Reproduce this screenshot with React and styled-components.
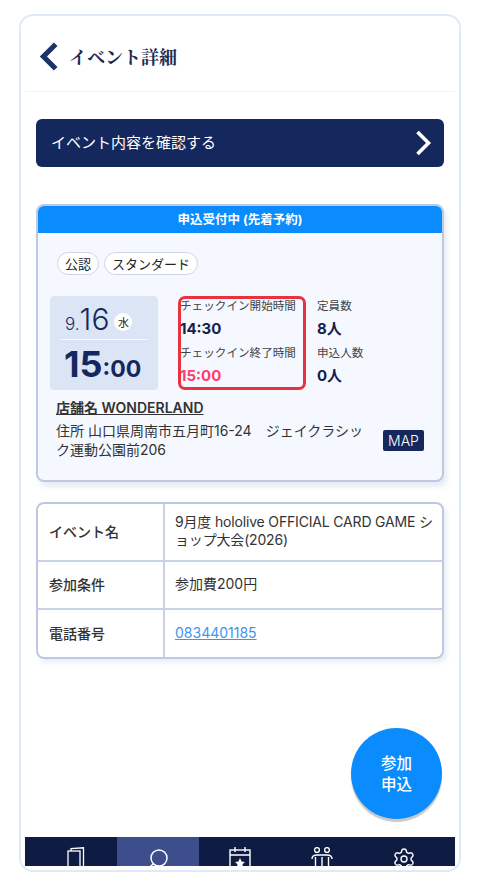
import styled, { createGlobalStyle } from "styled-components";
import { Search, Settings } from "lucide-react";

const Global = createGlobalStyle`
  html, body {
    margin: 0;
    background: #fff;
    font-family: Inter, "Noto Sans CJK JP", sans-serif;
    color: #222;
  }
  * { box-sizing: border-box; }
`;

const Page = styled.div`
  width: 480px;
  height: 886px;
  padding: 14px 19px 14px 19px;
  overflow: hidden;
`;

const Frame = styled.div`
  position: relative;
  height: 858px;
  border: 2px solid #dfe9f8;
  border-radius: 14px;
  padding: 0 4px 4px;
  display: flex;
  flex-direction: column;
  overflow: hidden;
`;

const Header = styled.header`
  height: 76px;
  flex: none;
  display: flex;
  align-items: center;
  gap: 10px;
  padding: 5px 0 0 14px;
  border-bottom: 1px solid #f1f3f6;
`;

const Title = styled.h1`
  margin: 0;
  font-family: "Liberation Serif", "Noto Serif CJK JP", "Noto Sans CJK JP", serif;
  font-size: 18px;
  font-weight: 700;
  color: #1c2b52;
`;

const Content = styled.main`
  flex: 1;
  padding: 27px 11px 0;
  display: flex;
  flex-direction: column;
`;

const ConfirmButton = styled.div`
  height: 48px;
  border-radius: 6px;
  background: #14285d;
  color: #fff;
  font-size: 15px;
  display: flex;
  align-items: center;
  justify-content: space-between;
  padding: 0 12px 0 15px;
`;

const ConfirmText = styled.span`
  margin-bottom: 3px;
`;

const Card = styled.section`
  margin-top: 37px;
  height: 278px;
  border: 2px solid #bcc9e0;
  border-radius: 8px;
  background: #f5f9ff;
  box-shadow: 3px 5px 5px rgba(188, 201, 224, 0.35);
  overflow: hidden;
`;

const StatusBar = styled.div`
  height: 27px;
  background: #0a8cff;
  color: #fff;
  font-size: 12.5px;
  font-weight: 700;
  padding-bottom: 2px;
  display: flex;
  align-items: center;
  justify-content: center;
`;

const Tags = styled.div`
  display: flex;
  gap: 5px;
  padding: 19px 0 0 19px;
`;

const Tag = styled.span`
  height: 23px;
  padding: 0 7px 1px;
  border: 1px solid #ccd5e4;
  border-radius: 12px;
  background: #fff;
  font-size: 13px;
  display: flex;
  align-items: center;
`;

const Schedule = styled.div`
  display: flex;
  margin: 21px 0 0 12px;
`;

const DateBox = styled.div`
  width: 108px;
  height: 94px;
  border-radius: 4px;
  background: #dbe5f6;
  color: #14285d;
  padding: 0 10px;
  flex: none;
`;

const DateRow = styled.div`
  height: 44px;
  display: flex;
  align-items: baseline;
  padding: 5px 0 0 5px;
  border-bottom: 1px solid #f5f8fd;
  font-size: 17px;
  font-weight: 300;
`;

const Day = styled.span`
  font-size: 30px;
  margin-right: 5px;
`;

const Weekday = styled.span`
  width: 18px;
  height: 18px;
  border-radius: 50%;
  background: #fff;
  color: #222;
  font-size: 11px;
  font-weight: 400;
  display: flex;
  align-items: center;
  justify-content: center;
  align-self: center;
  margin-top: 4px;
`;

const TimeRow = styled.div`
  display: flex;
  align-items: baseline;
  padding: 2px 0 0 4px;
  font-weight: 700;
  font-size: 36px;
  line-height: 44px;
`;

const Minutes = styled.span`
  font-size: 23px;
`;

const CheckIn = styled.div`
  margin-left: 20px;
  width: 128px;
  height: 94px;
  border: 3px solid #e8323f;
  border-radius: 7px;
  flex: none;
`;

const Stat = styled.div`
  height: 47px;
  padding-top: ${(props) => props.$top}px;
  margin-left: ${(props) => props.$shift || 0}px;
`;

const StatLabel = styled.div`
  font-size: 11.6px;
  line-height: 14px;
  color: #444;
  white-space: nowrap;
`;

const StatValue = styled.div`
  margin-top: 7px;
  font-size: 15px;
  line-height: 18px;
  font-weight: 700;
  color: ${(props) => props.$color || "#14204d"};
`;

const Capacity = styled.div`
  margin-left: 11px;
  height: 94px;
`;

const Shop = styled.div`
  margin: 9px 18px 0 18px;
`;

const ShopName = styled.div`
  font-size: 14px;
  font-weight: 600;
  line-height: 18px;
  text-decoration: underline;
  color: #333;
`;

const AddressRow = styled.div`
  display: flex;
  align-items: center;
  justify-content: space-between;
  margin-top: 4px;
`;

const Address = styled.div`
  width: 310px;
  font-size: 14px;
  line-height: 19px;
  color: #333;
`;

const MapButton = styled.span`
  width: 41px;
  height: 21px;
  border-radius: 2px;
  background: #14285d;
  color: #fff;
  font-size: 14px;
  font-weight: 300;
  display: flex;
  align-items: center;
  justify-content: center;
`;

const InfoTable = styled.div`
  margin-top: 20px;
  border: 2px solid #bcc9e0;
  border-radius: 8px;
  box-shadow: 3px 4px 4px rgba(188, 201, 224, 0.3);
  overflow: hidden;
  background: #fff;
`;

const Row = styled.div`
  display: grid;
  grid-template-columns: 127px 1fr;
  min-height: ${(props) => props.$height}px;
  border-top: ${(props) => (props.$first ? "none" : "2px solid #c8d4e6")};
`;

const Label = styled.div`
  padding: 0 0 2px 11px;
  display: flex;
  align-items: center;
  font-size: 14px;
  font-weight: 500;
  color: #333;
  border-right: 2px solid #c8d4e6;
`;

const Value = styled.div`
  padding: 0 7px 2px 10px;
  display: flex;
  align-items: center;
  font-size: 14px;
  line-height: 18px;
  color: #333;
  line-break: anywhere;
  letter-spacing: ${(props) => (props.$tight ? "-0.17px" : "0")};
`;

const Phone = styled.a`
  color: #3a96f0;
  text-decoration: underline;
`;

const Fab = styled.div`
  position: absolute;
  left: 330px;
  top: 712px;
  width: 91px;
  height: 91px;
  border-radius: 50%;
  background: #0a8cff;
  box-shadow: 0 3px 1px #c9c9c9;
  color: #fff;
  font-size: 15.5px;
  font-weight: 500;
  line-height: 21px;
  text-align: center;
  display: flex;
  align-items: center;
  justify-content: center;
`;

const Nav = styled.nav`
  height: 29px;
  flex: none;
  background: #0e1c44;
  display: grid;
  grid-template-columns: repeat(5, 82px);
  padding-left: 10px;
  overflow: hidden;
`;

const NavItem = styled.div`
  background: ${(props) => (props.$active ? "#3c4f8c" : "transparent")};
  display: flex;
  justify-content: center;
  padding-top: 10px;
  color: #fff;
`;

const Chevron = ({ left, color, width, height, stroke }) => (
  <svg width={width} height={height} viewBox="0 0 16 26" fill="none">
    <path
      d={left ? "M14 2 L3 13 L14 24" : "M2 2 L13 13 L2 24"}
      stroke={color}
      strokeWidth={stroke}
    />
  </svg>
);

const CardsIcon = () => (
  <svg width="18" height="26" viewBox="0 0 18 26" fill="none" stroke="#fff" strokeWidth="1.3">
    <rect x="1" y="4" width="12" height="21" />
    <path d="M4 4 V1.5 L16.5 0.8 V21 L13 22" />
  </svg>
);

const CalendarIcon = () => (
  <svg width="24" height="26" viewBox="0 0 24 26" fill="none" stroke="#fff" strokeWidth="1.4">
    <rect x="2" y="3" width="20" height="22" />
    <path d="M2 8 H22 M7 0 V5 M17 0 V5" />
    <path d="M12 11 L13.6 14.5 L17 14.9 L14.5 17.2 L15.2 20.5 L12 18.9 L8.8 20.5 L9.5 17.2 L7 14.9 L10.4 14.5 Z" fill="#fff" stroke="none" />
  </svg>
);

const PeopleIcon = () => (
  <svg width="22" height="26" viewBox="0 0 22 26" fill="none" stroke="#fff" strokeWidth="1.4">
    <circle cx="6" cy="3" r="2.4" />
    <circle cx="16" cy="3" r="2.4" />
    <path d="M1 12 C1 8 4 8 6 8 H16 C18 8 21 8 21 12 M4.5 10 V24 M11 10 V24 M17.5 10 V24 M4.5 24 H17.5" />
  </svg>
);

export default function App() {
  return (
    <Page>
      <Global />
      <Frame>
        <Header>
          <Chevron left color="#1c3268" width={20} height={29} stroke={4.6} />
          <Title>イベント詳細</Title>
        </Header>
        <Content>
          <ConfirmButton>
            <ConfirmText>イベント内容を確認する</ConfirmText>
            <Chevron color="#fff" width={17} height={26} stroke={3.6} />
          </ConfirmButton>
          <Card>
            <StatusBar>申込受付中 (先着予約)</StatusBar>
            <Tags>
              <Tag>公認</Tag>
              <Tag>スタンダード</Tag>
            </Tags>
            <Schedule>
              <DateBox>
                <DateRow>
                  9.<Day>16</Day>
                  <Weekday>水</Weekday>
                </DateRow>
                <TimeRow>
                  15<Minutes>:00</Minutes>
                </TimeRow>
              </DateBox>
              <CheckIn>
                <Stat $top={0} $shift={-1}>
                  <StatLabel>チェックイン開始時間</StatLabel>
                  <StatValue>14:30</StatValue>
                </Stat>
                <Stat $top={0} $shift={-1}>
                  <StatLabel>チェックイン終了時間</StatLabel>
                  <StatValue $color="#ff3d6e">15:00</StatValue>
                </Stat>
              </CheckIn>
              <Capacity>
                <Stat $top={3}>
                  <StatLabel>定員数</StatLabel>
                  <StatValue>8人</StatValue>
                </Stat>
                <Stat $top={3}>
                  <StatLabel>申込人数</StatLabel>
                  <StatValue>0人</StatValue>
                </Stat>
              </Capacity>
            </Schedule>
            <Shop>
              <ShopName>店舗名 WONDERLAND</ShopName>
              <AddressRow>
                <Address>住所 山口県周南市五月町16-24　ジェイクラシック運動公園前206</Address>
                <MapButton>MAP</MapButton>
              </AddressRow>
            </Shop>
          </Card>
          <InfoTable>
            <Row $first $height={56}>
              <Label>イベント名</Label>
              <Value $tight>9月度 hololive OFFICIAL CARD GAME ショップ大会(2026)</Value>
            </Row>
            <Row $height={48}>
              <Label>参加条件</Label>
              <Value>参加費200円</Value>
            </Row>
            <Row $height={49}>
              <Label>電話番号</Label>
              <Value>
                <Phone href="#">0834401185</Phone>
              </Value>
            </Row>
          </InfoTable>
        </Content>
        <Fab>
          参加
          <br />
          申込
        </Fab>
        <Nav>
          <NavItem>
            <CardsIcon />
          </NavItem>
          <NavItem $active>
            <Search size={24} strokeWidth={1.5} style={{ transform: "scaleX(-1)" }} />
          </NavItem>
          <NavItem>
            <CalendarIcon />
          </NavItem>
          <NavItem>
            <PeopleIcon />
          </NavItem>
          <NavItem>
            <Settings size={24} strokeWidth={1.4} />
          </NavItem>
        </Nav>
      </Frame>
    </Page>
  );
}
